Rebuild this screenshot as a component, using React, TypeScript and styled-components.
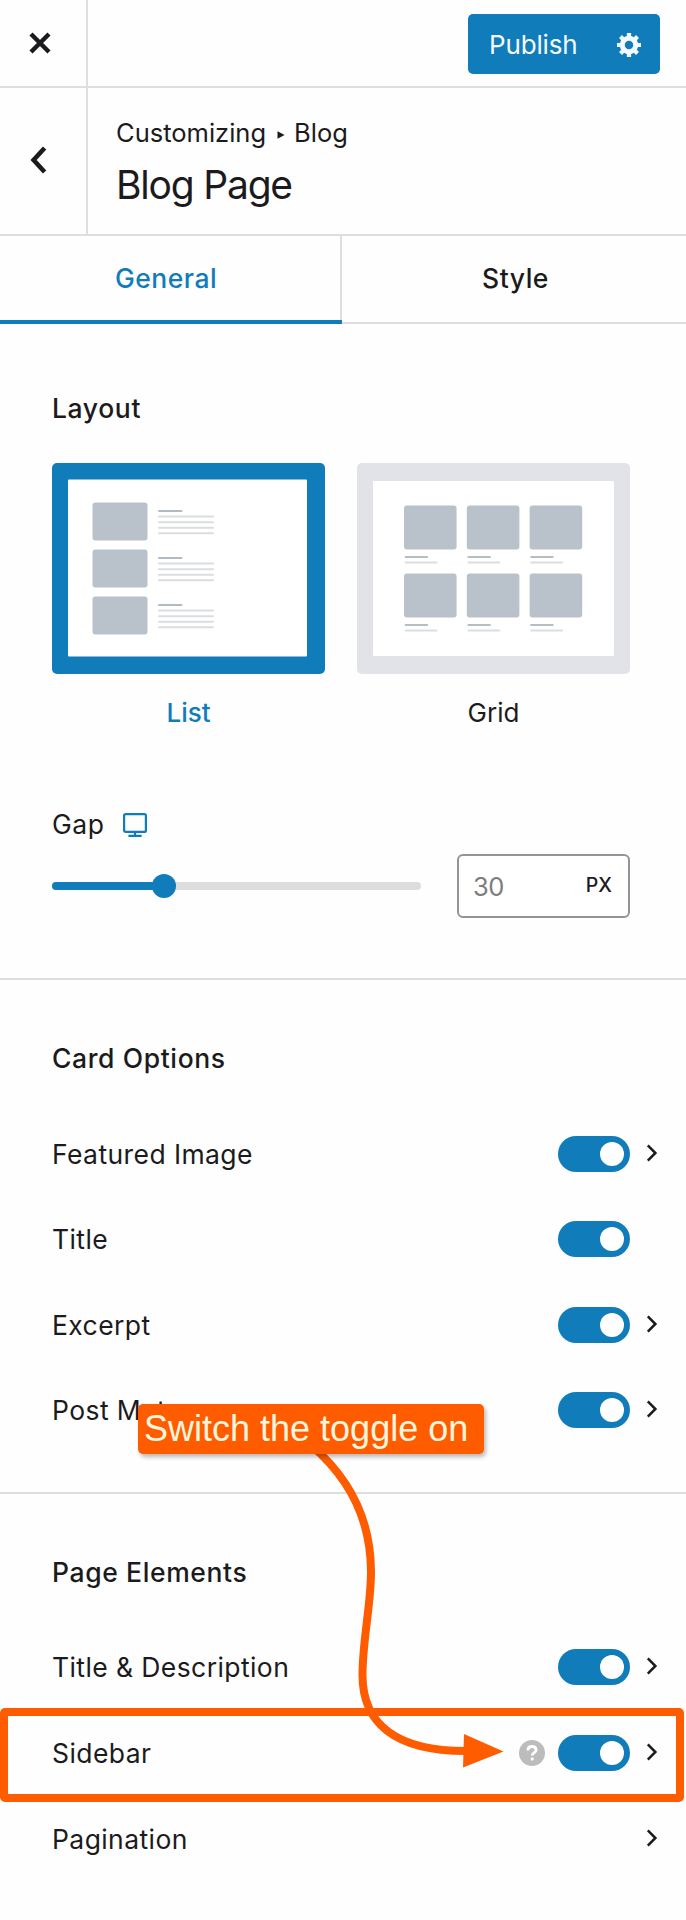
import React from "react";
import styled, { createGlobalStyle } from "styled-components";

const BLUE = "#117cba";
const INK = "#1b1b1d";
const LINE = "#dedede";
const ORANGE = "#ff5c00";

const GlobalStyle = createGlobalStyle`
  *, *::before, *::after { box-sizing: border-box; }
  body {
    margin: 0;
    background: #fefefe;
    color: ${INK};
    font-family: Inter, "Liberation Sans", sans-serif;
    font-size: 26px;
    line-height: 32px;
  }
  button { font: inherit; color: inherit; border: 0; background: none; padding: 0; }
  h1, h2, p { margin: 0; font-weight: inherit; font-size: inherit; }
  svg { display: block; }
`;

const Panel = styled.div`
  position: relative;
  width: 686px;
  height: 1920px;
  overflow: hidden;
`;

const TopBar = styled.header`
  display: flex;
  height: 88px;
  border-bottom: 2px solid ${LINE};
`;

const SideButton = styled.button<{ $lift?: number }>`
  display: flex;
  flex: none;
  width: 88px;
  padding: 0 0 ${(p) => p.$lift ?? 0}px 29px;
  align-items: center;
  border-right: 2px solid ${LINE};
`;

const TopActions = styled.div`
  display: flex;
  flex: 1;
  justify-content: flex-end;
  align-items: flex-start;
  padding: 14px 26px 0 0;
`;

const PublishButton = styled.button`
  display: flex;
  align-items: center;
  justify-content: space-between;
  width: 192px;
  height: 60px;
  padding: 1px 19px 0 21px;
  border-radius: 5px;
  background: ${BLUE};
  color: #f4fbff;
  letter-spacing: -0.15px;
`;

const TitleBar = styled.div`
  display: flex;
  height: 148px;
  border-bottom: 2px solid ${LINE};
`;

const Titles = styled.div`
  padding: 29px 0 0 28px;
`;

const Breadcrumb = styled.p`
  display: flex;
  align-items: center;
  font-size: 25.5px;
`;

const CrumbArrow = styled.svg`
  margin: 3px 9px 0 11px;
`;

const PageTitle = styled.h1`
  margin-top: 12px;
  font-size: 39px;
  line-height: 48px;
  letter-spacing: -1.2px;
`;

const Tabs = styled.nav`
  display: flex;
  height: 88px;
`;

const Tab = styled.button<{ $active?: boolean }>`
  display: flex;
  align-items: center;
  justify-content: center;
  flex: ${(p) => (p.$active ? "0 0 342px" : "1")};
  padding: ${(p) => (p.$active ? "0 10px 0 0" : "0 0 2px 3px")};
  font-size: 26.5px;
  font-weight: 500;
  letter-spacing: 0.5px;
  color: ${(p) => (p.$active ? BLUE : INK)};
  border-bottom: ${(p) => (p.$active ? `4px solid ${BLUE}` : `2px solid ${LINE}`)};
  box-shadow: ${(p) => (p.$active ? `inset -2px 0 ${LINE}` : "none")};
`;

const Section = styled.section<{ $height: number; $top: number; $divided?: boolean }>`
  height: ${(p) => p.$height}px;
  padding: ${(p) => p.$top}px 26px 0 52px;
  border-bottom: ${(p) => (p.$divided ? `2px solid ${LINE}` : "none")};
`;

const Heading = styled.h2`
  font-size: 26.5px;
  font-weight: 500;
  letter-spacing: 0.62px;
`;

const Choices = styled.div`
  display: flex;
  gap: 32px;
  margin-top: 39px;
`;

const Choice = styled.div<{ $active?: boolean }>`
  display: flex;
  flex-direction: column;
  align-items: center;
  gap: 23px;
  width: 273px;
  font-weight: ${(p) => (p.$active ? 500 : 400)};
  color: ${(p) => (p.$active ? BLUE : INK)};
`;

const Frame = styled.div<{ $active?: boolean }>`
  width: 273px;
  height: 211px;
  border-radius: 5px;
  background: ${(p) => (p.$active ? BLUE : "#e2e2e9")};
`;

const GapLabel = styled.div`
  display: flex;
  align-items: center;
  gap: 17.5px;
  margin-top: 79px;
  font-size: 26.5px;
  letter-spacing: 0.5px;
`;

const GapName = styled.span`
  padding-bottom: 2px;
`;

const GapRow = styled.div`
  display: flex;
  align-items: center;
  gap: 36px;
  margin-top: 12px;
`;

const Track = styled.div`
  display: flex;
  align-items: center;
  width: 369px;
  height: 8px;
  border-radius: 4px;
  background: #dddddd;
`;

const TrackFill = styled.div`
  width: 112px;
  height: 8px;
  border-radius: 4px;
  background: ${BLUE};
`;

const Thumb = styled.div`
  width: 24px;
  height: 24px;
  margin-left: -12px;
  border-radius: 50%;
  background: ${BLUE};
`;

const NumberBox = styled.div`
  display: flex;
  align-items: center;
  justify-content: space-between;
  width: 173px;
  height: 64px;
  padding: 0 16px 0 14px;
  border: 2px solid #949494;
  border-radius: 6px;
  background: #fff;
`;

const Amount = styled.span`
  padding-top: 1px;
  font-size: 25.5px;
  letter-spacing: -0.5px;
  color: #7d7d7d;
`;

const Unit = styled.span`
  padding-bottom: 2px;
  font-size: 19.5px;
  font-weight: 500;
`;

const Rows = styled.div<{ $top: number }>`
  margin-top: ${(p) => p.$top}px;
`;

const Row = styled.div<{ $height: number }>`
  position: relative;
  display: flex;
  align-items: center;
  height: ${(p) => p.$height}px;
`;

const RowLabel = styled.span`
  flex: 1;
  font-size: 26.5px;
  letter-spacing: 0.41px;
`;

const HelpIcon = styled.svg`
  margin-right: 13px;
`;

const Switch = styled.span`
  display: flex;
  justify-content: flex-end;
  width: 72px;
  height: 36px;
  padding: 6px;
  border-radius: 18px;
  background: ${BLUE};
`;

const Knob = styled.span`
  width: 24px;
  height: 24px;
  border-radius: 50%;
  background: #fff;
`;

const ChevronSlot = styled.span`
  width: 30px;
  padding: 0 0 2px 16px;
`;

const Highlight = styled.div`
  position: absolute;
  inset: -2px -24px auto -52px;
  height: 94px;
  border: 8px solid ${ORANGE};
  border-radius: 5px;
`;

const Arrow = styled.svg`
  position: absolute;
  left: 300px;
  top: 1440px;
`;

const Callout = styled.div`
  position: absolute;
  left: 138px;
  top: 1404px;
  width: 346px;
  height: 50px;
  padding: 5px 0 0 6px;
  border-radius: 5px;
  background: ${ORANGE};
  box-shadow: 2px 3px 4px rgba(0, 0, 0, 0.28);
  color: #fff6de;
  font-family: "Liberation Sans", Arial, sans-serif;
  font-size: 36px;
  line-height: 40px;
  white-space: nowrap;
`;

const Chevron = () => (
  <svg width="14" height="18" viewBox="0 0 14 18" fill="none" stroke={INK} strokeWidth="2.5">
    <path d="M1.8 1.4 L9.4 9 L1.8 16.6" />
  </svg>
);

const Help = () => (
  <HelpIcon width="26" height="26" viewBox="0 0 26 26">
    <circle cx="13" cy="13" r="13" fill="#bcbcbc" />
    <path
      d="M8.9 10.4 C8.9 7.8 10.6 6.5 13 6.5 C15.4 6.5 17.1 7.9 17.1 10 C17.1 12.6 13.2 12.7 13.2 15.6"
      fill="none"
      stroke="#fff"
      strokeWidth="2.8"
    />
    <rect x="11.7" y="17.6" width="3" height="3" rx="0.8" fill="#fff" />
  </HelpIcon>
);

const ListArt = () => (
  <svg width="273" height="211" viewBox="0 0 273 211">
    <rect x="16" y="16.5" width="239" height="177" rx="1" fill="#fff" />
    {[39.5, 86.5, 133.5].map((y) => (
      <g key={y}>
        <rect x="40.5" y={y} width="55" height="38" rx="3" fill="#b9c1cb" />
        <rect x="106" y={y + 7.5} width="24.5" height="2" rx="1" fill="#b2bac4" />
        {[13.1, 18.7, 24.3, 29.8].map((d) => (
          <rect key={d} x="106" y={y + d} width="56" height="2" rx="1" fill="#dcdddf" />
        ))}
      </g>
    ))}
  </svg>
);

const GridArt = () => (
  <svg width="273" height="211" viewBox="0 0 273 211">
    <rect x="16" y="18" width="241" height="175" rx="1" fill="#fff" />
    {[42.5, 110.5].map((y) =>
      [47, 109.8, 172.6].map((x) => (
        <g key={`${x}-${y}`}>
          <rect x={x} y={y} width="52.6" height="44" rx="3" fill="#b9c1cb" />
          <rect x={x + 0.6} y={y + 50.4} width="23.5" height="2" rx="1" fill="#b4bcc4" />
          <rect x={x + 0.6} y={y + 56} width="33" height="2" rx="1" fill="#dcdde1" />
        </g>
      ))
    )}
  </svg>
);

type Option = {
  label: string;
  toggle?: boolean;
  chevron?: boolean;
  help?: boolean;
  highlight?: boolean;
};

const cardOptions: Option[] = [
  { label: "Featured Image", toggle: true, chevron: true },
  { label: "Title", toggle: true },
  { label: "Excerpt", toggle: true, chevron: true },
  { label: "Post Meta", toggle: true, chevron: true },
];

const pageElements: Option[] = [
  { label: "Title & Description", toggle: true, chevron: true },
  { label: "Sidebar", toggle: true, chevron: true, help: true, highlight: true },
  { label: "Pagination", chevron: true },
];

const OptionRow = ({ option, height }: { option: Option; height: number }) => (
  <Row $height={height}>
    <RowLabel>{option.label}</RowLabel>
    {option.help && <Help />}
    {option.toggle && (
      <Switch role="switch" aria-checked="true">
        <Knob />
      </Switch>
    )}
    <ChevronSlot>{option.chevron && <Chevron />}</ChevronSlot>
    {option.highlight && <Highlight />}
  </Row>
);

export default function App() {
  return (
    <Panel>
      <GlobalStyle />
      <TopBar>
        <SideButton aria-label="Close">
          <svg width="22" height="22" viewBox="0 0 22 22" stroke={INK} strokeWidth="4.5">
            <path d="M2 2 L20 20 M20 2 L2 20" />
          </svg>
        </SideButton>
        <TopActions>
          <PublishButton>
            <span>Publish</span>
            <svg width="24" height="24" viewBox="1 2 17 17" fill="#f4fbff">
              <path d="M18 12h-2.18c-.17.7-.44 1.35-.81 1.93l1.54 1.54-2.1 2.1-1.54-1.54c-.58.36-1.23.63-1.91.79V19H8v-2.18c-.68-.16-1.33-.43-1.91-.79l-1.54 1.54-2.12-2.12 1.54-1.54c-.36-.58-.63-1.23-.79-1.91H1V9.03h2.17c.16-.7.44-1.35.8-1.94L2.43 5.55l2.1-2.1 1.54 1.54c.58-.37 1.24-.64 1.93-.81V2h3v2.18c.68.16 1.33.43 1.91.79l1.54-1.54 2.12 2.12-1.54 1.54c.36.59.64 1.24.8 1.94H18V12zm-8.5 1.5c1.66 0 3-1.34 3-3s-1.34-3-3-3-3 1.34-3 3 1.34 3 3 3z" />
            </svg>
          </PublishButton>
        </TopActions>
      </TopBar>

      <TitleBar>
        <SideButton aria-label="Back" $lift={2}>
          <svg width="20" height="28" viewBox="0 0 20 28" fill="none" stroke={INK} strokeWidth="4.6">
            <path d="M15.6 2 L4.6 14 L15.6 26" />
          </svg>
        </SideButton>
        <Titles>
          <Breadcrumb>
            <span>Customizing</span>
            <CrumbArrow width="8" height="8" viewBox="0 0 8 8" fill={INK}>
              <path d="M0.5 0.3 L7.6 4 L0.5 7.7 Z" />
            </CrumbArrow>
            <span>Blog</span>
          </Breadcrumb>
          <PageTitle>Blog Page</PageTitle>
        </Titles>
      </TitleBar>

      <Tabs>
        <Tab $active>General</Tab>
        <Tab>Style</Tab>
      </Tabs>

      <Section $height={656} $top={68} $divided>
        <Heading>Layout</Heading>
        <Choices>
          <Choice $active>
            <Frame $active>
              <ListArt />
            </Frame>
            <span>List</span>
          </Choice>
          <Choice>
            <Frame>
              <GridArt />
            </Frame>
            <span>Grid</span>
          </Choice>
        </Choices>
        <GapLabel>
          <GapName>Gap</GapName>
          <svg width="26" height="26" viewBox="0 0 26 26" fill="none" stroke={BLUE} strokeWidth="2.2">
            <rect x="2.1" y="2.1" width="21.8" height="17.8" rx="1.5" />
            <path d="M13 20 V23.4 M6.4 23.9 H19.6" />
          </svg>
        </GapLabel>
        <GapRow>
          <Track>
            <TrackFill />
            <Thumb />
          </Track>
          <NumberBox>
            <Amount>30</Amount>
            <Unit>PX</Unit>
          </NumberBox>
        </GapRow>
      </Section>

      <Section $height={514} $top={61.5} $divided>
        <Heading>Card Options</Heading>
        <Rows $top={37.9}>
          {cardOptions.map((o) => (
            <OptionRow key={o.label} option={o} height={85.3} />
          ))}
        </Rows>
      </Section>

      <Section $height={426} $top={61.5}>
        <Heading>Page Elements</Heading>
        <Rows $top={36.8}>
          {pageElements.map((o) => (
            <OptionRow key={o.label} option={o} height={85.7} />
          ))}
        </Rows>
      </Section>

      <Arrow width="210" height="340" viewBox="300 1440 210 340">
        <path
          d="M312 1446 C356 1484 371 1528 371 1572 C371 1605 362.5 1640 362.5 1675 C362.5 1722 393 1751 466 1751"
          fill="none"
          stroke={ORANGE}
          strokeWidth="8"
        />
        <path d="M464 1734 L503.5 1751.5 L463 1767.5 Z" fill={ORANGE} />
      </Arrow>
      <Callout>Switch the toggle on</Callout>
    </Panel>
  );
}
